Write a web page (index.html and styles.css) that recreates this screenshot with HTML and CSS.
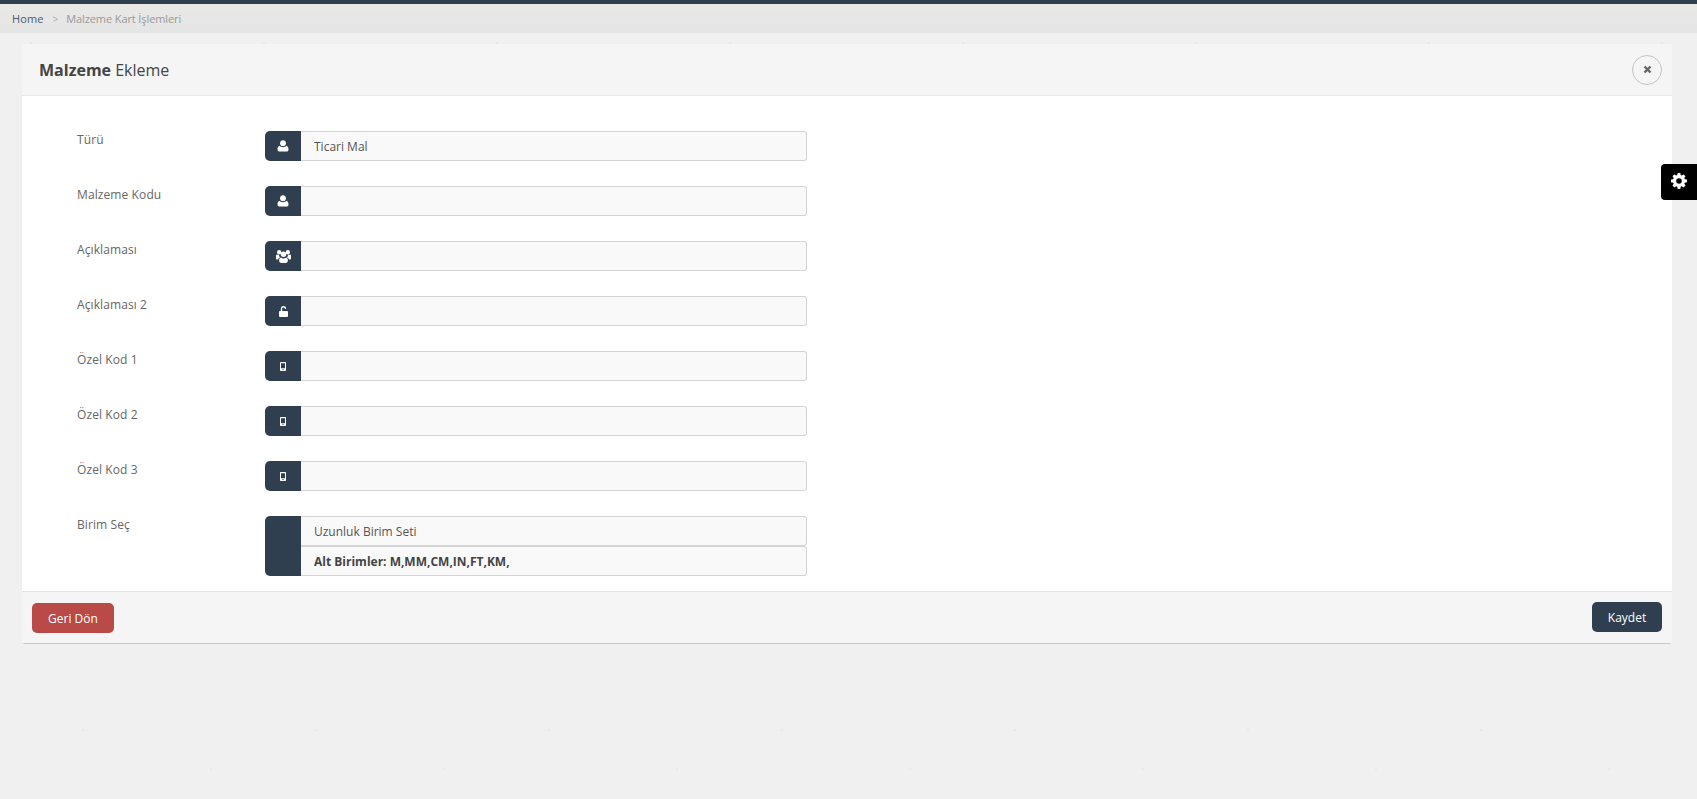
FILE: index.html
```html
<!DOCTYPE html>
<html lang="tr">
<head>
  <meta charset="UTF-8" />
  <title>Malzeme Ekleme</title>
  <link rel="stylesheet" href="styles.css">
</head>
<body>

<svg class="defs" width="0" height="0">
  <symbol id="i-user" viewBox="0 0 12 12">
    <circle cx="6" cy="3.2" r="2.9"/>
    <path d="M2.6 5.8C3.4 6.8 4.6 7.2 6 7.2s2.6-.4 3.4-1.4c1.3.4 2.1 1.6 2.1 3.6 0 1.3-.8 2.1-2 2.1H2.500c-1.200 0-2-.8-2-2.100 0-2 .8-3.200 2.100-3.600z"/>
  </symbol>
  <symbol id="i-group" viewBox="0 0 15 13">
    <circle cx="3.200" cy="2.300" r="2.200"/>
    <circle cx="11.800" cy="2.300" r="2.200"/>
    <circle cx="7.500" cy="4.200" r="2.700"/>
    <path d="M.2 4.800h2.700c.1 1 .5 1.900 1.200 2.600-1.100.4-1.800 1.200-2.100 2.200H1C.4 9.600 0 9.200 0 8.600V5.900c0-.4 0-.8.200-1.100zM14.800 4.800h-2.700c-.1 1-.5 1.900-1.200 2.600 1.100.4 1.800 1.200 2.100 2.200h1c.6 0 1-.4 1-1V5.900c0-.4 0-.8-.2-1.100zM4.800 7.400c.7.600 1.700 1 2.700 1s2-.4 2.700-1c1.100.4 1.700 1.500 1.700 2.900 0 1.700-1 2.700-2.400 2.700H5.500c-1.400 0-2.400-1-2.400-2.700 0-1.400.6-2.500 1.700-2.900z"/>
  </symbol>
  <symbol id="i-unlock" viewBox="0 0 10 12">
    <path d="M2 5.500V3.200C2 1.300 3.200 0 5 0s3 1.300 3 3.200H6.500C6.500 2.300 6 1.600 5 1.600S3.500 2.300 3.500 3.200v2.300H9c.6 0 1 .4 1 1V11c0 .6-.4 1-1 1H1c-.6 0-1-.4-1-1V6.500c0-.6.4-1 1-1z"/>
  </symbol>
  <symbol id="i-mobile" viewBox="0 0 6 9">
    <path fill-rule="evenodd" d="M.8 0h4.400c.5 0 .8.300.8.800v7.400c0 .5-.3.800-.8.800H.8C.3 9 0 8.700 0 8.200V.8C0 .3.300 0 .8 0zM1 1.200v5h4v-5zM3 6.900a.7.700 0 1 0 0 1.400.7.700 0 0 0 0-1.400z"/>
  </symbol>
</svg>

<div class="top-bar"></div>

<div class="breadcrumb">
  <a class="crumb-home">Home</a>
  <span class="crumb-sep">&gt;</span>
  <span class="crumb-current">Malzeme Kart İşlemleri</span>
</div>

<div class="panel">
  <div class="panel-header">
    <h3><b>Malzeme</b> Ekleme</h3>
    <button class="btn-close" aria-label="Kapat">
      <svg width="9" height="9" viewBox="0 0 9 9"><path d="M1.500 1.500l6 6M7.500 1.500l-6 6"/></svg>
    </button>
  </div>

  <div class="panel-body">
    <div class="form-row">
      <label>Türü</label>
      <div class="input-group">
        <span class="addon"><svg class="ico-user"><use href="#i-user"/></svg></span>
        <div class="inputs"><input type="text" value="Ticari Mal" /></div>
      </div>
    </div>
    <div class="form-row">
      <label>Malzeme Kodu</label>
      <div class="input-group">
        <span class="addon"><svg class="ico-user"><use href="#i-user"/></svg></span>
        <div class="inputs"><input type="text" /></div>
      </div>
    </div>
    <div class="form-row">
      <label>Açıklaması</label>
      <div class="input-group">
        <span class="addon"><svg class="ico-group"><use href="#i-group"/></svg></span>
        <div class="inputs"><input type="text" /></div>
      </div>
    </div>
    <div class="form-row">
      <label>Açıklaması 2</label>
      <div class="input-group">
        <span class="addon"><svg class="ico-unlock"><use href="#i-unlock"/></svg></span>
        <div class="inputs"><input type="text" /></div>
      </div>
    </div>
    <div class="form-row">
      <label>Özel Kod 1</label>
      <div class="input-group">
        <span class="addon"><svg class="ico-mobile"><use href="#i-mobile"/></svg></span>
        <div class="inputs"><input type="text" /></div>
      </div>
    </div>
    <div class="form-row">
      <label>Özel Kod 2</label>
      <div class="input-group">
        <span class="addon"><svg class="ico-mobile"><use href="#i-mobile"/></svg></span>
        <div class="inputs"><input type="text" /></div>
      </div>
    </div>
    <div class="form-row">
      <label>Özel Kod 3</label>
      <div class="input-group">
        <span class="addon"><svg class="ico-mobile"><use href="#i-mobile"/></svg></span>
        <div class="inputs"><input type="text" /></div>
      </div>
    </div>
    <div class="form-row">
      <label>Birim Seç</label>
      <div class="input-group">
        <span class="addon"></span>
        <div class="inputs">
          <input type="text" value="Uzunluk Birim Seti" />
          <input type="text" class="strong" value="Alt Birimler: M,MM,CM,IN,FT,KM," />
        </div>
      </div>
    </div>
  </div>

  <div class="panel-footer">
    <button class="btn btn-danger">Geri Dön</button>
    <button class="btn btn-dark">Kaydet</button>
  </div>
</div>

<div class="settings-tab">
  <svg width="16" height="16" viewBox="0 0 16 16"><path fill-rule="evenodd" d="M6.700 0h2.600l.4 2.100 1.100.5L12.600 1.400l1.900 1.900-1.200 1.800.5 1.100 2.200.4v2.700l-2.200.4-.5 1.100 1.200 1.800-1.900 1.900-1.800-1.200-1.100.5-.4 2.200H6.700l-.4-2.200-1.100-.5-1.800 1.200-1.900-1.900 1.200-1.800-.5-1.100L0 9.300V6.600l2.200-.4.500-1.100-1.200-1.800 1.900-1.900 1.800 1.200 1.100-.5zM8 5.200a2.800 2.800 0 1 0 0 5.600 2.800 2.800 0 0 0 0-5.600z"/></svg>
</div>

</body>
</html>
```

FILE: styles.css
```css
* { box-sizing: border-box; }
body {
  margin: 0;
  min-height: 799px;
  font-family: 'Open Sans', sans-serif;
  font-size: 12px;
  color: #555;
  background-color: #f0f0f0;
  /* faint paper speckle */
  background-image:
    radial-gradient(circle at 31px 43px, #e9e9e9 1px, transparent 1.5px),
    radial-gradient(circle at 167px 21px, #ebebeb 1px, transparent 1.5px),
    radial-gradient(circle at 83px 139px, #e9e9e9 1px, transparent 1.5px),
    radial-gradient(circle at 211px 178px, #ebebeb 1px, transparent 1.5px);
  background-size: 233px 197px;
}
.defs {
  display: block;
  height: 0;
}
.top-bar {
  height: 4px;
  background: #2f3f50;
}
.breadcrumb {
  height: 29px;
  display: flex;
  align-items: center;
  padding-left: 12px;
  background: linear-gradient(to bottom, #eae8e7, #e4e5e5);
  font-size: 11px;
}
.crumb-home {
  color: #4a5a68;
  letter-spacing: 0.1px;
}
.crumb-sep {
  margin: 0 8px 0 9px;
  color: #aaa;
  font-size: 10px;
}
.crumb-current {
  color: #999;
  letter-spacing: -0.1px;
}

.panel {
  margin: 11px 25px 0 22px;
  background: #fff;
  border-radius: 0 0 3px 3px;
  border-bottom: 1px solid #c8c8c8;
}
.panel-header {
  height: 52px;
  display: flex;
  align-items: center;
  justify-content: space-between;
  padding: 0 10px 0 17px;
  background: #f5f5f5;
  border-bottom: 1px solid #e8e8e8;
}
.panel-header h3 {
  margin: 0;
  font-size: 16px;
  font-weight: 400;
  color: #444;
}
.panel-header b { font-weight: 700; }
.btn-close {
  width: 30px;
  height: 30px;
  display: flex;
  align-items: center;
  justify-content: center;
  padding: 0;
  background: transparent;
  border: 1px solid #c4c4c4;
  border-radius: 50%;
}
.btn-close svg {
  stroke: #666;
  stroke-width: 2.400;
  fill: none;
}

.panel-body {
  display: flex;
  flex-direction: column;
  gap: 25px;
  padding: 35px 0 15px 55px;
}
.form-row {
  display: flex;
}
.form-row label {
  width: 188px;
  padding-top: 1px;
  color: #666;
  font-size: 12px;
  line-height: 16px;
  letter-spacing: 0.1px;
}
.input-group {
  width: 542px;
  display: flex;
}
.addon {
  width: 36px;
  flex-shrink: 0;
  min-height: 30px;
  display: flex;
  align-items: center;
  justify-content: center;
  background: #2f3f50;
  border-radius: 5px 0 0 5px;
}
.addon svg { fill: #fff; }
.ico-user { width: 12px; height: 12px; }
.ico-group { width: 15px; height: 13px; }
.ico-unlock { width: 9px; height: 11px; }
.ico-mobile { width: 6px; height: 9px; }
.inputs {
  flex: 1;
  display: flex;
  flex-direction: column;
}
.inputs input {
  width: 100%;
  height: 30px;
  padding: 0 13px;
  font-family: inherit;
  font-size: 12px;
  color: #555;
  background: #f9f9f9;
  border: 1px solid #d4d4d4;
  border-left: none;
  border-radius: 0 3px 3px 0;
  outline: none;
}
.inputs input.strong {
  font-weight: 700;
  color: #444;
}

.panel-footer {
  height: 52px;
  display: flex;
  align-items: flex-start;
  justify-content: space-between;
  padding: 11px 10px 0;
  background: #f5f5f5;
  border-top: 1px solid #e4e4e4;
}
.btn {
  height: 30px;
  border: none;
  border-radius: 5px;
  color: #fff;
  font-family: inherit;
  font-size: 12px;
}
.btn-danger {
  width: 82px;
  background: #b94a48;
}
.btn-dark {
  width: 70px;
  margin-top: -1px;
  background: #2f3f50;
}

.settings-tab {
  position: absolute;
  top: 164px;
  right: 0;
  width: 36px;
  height: 36px;
  display: flex;
  align-items: center;
  justify-content: center;
  padding-bottom: 2px;
  background: #000;
  border-radius: 4px 0 0 4px;
}
.settings-tab svg { fill: #fff; }
```
